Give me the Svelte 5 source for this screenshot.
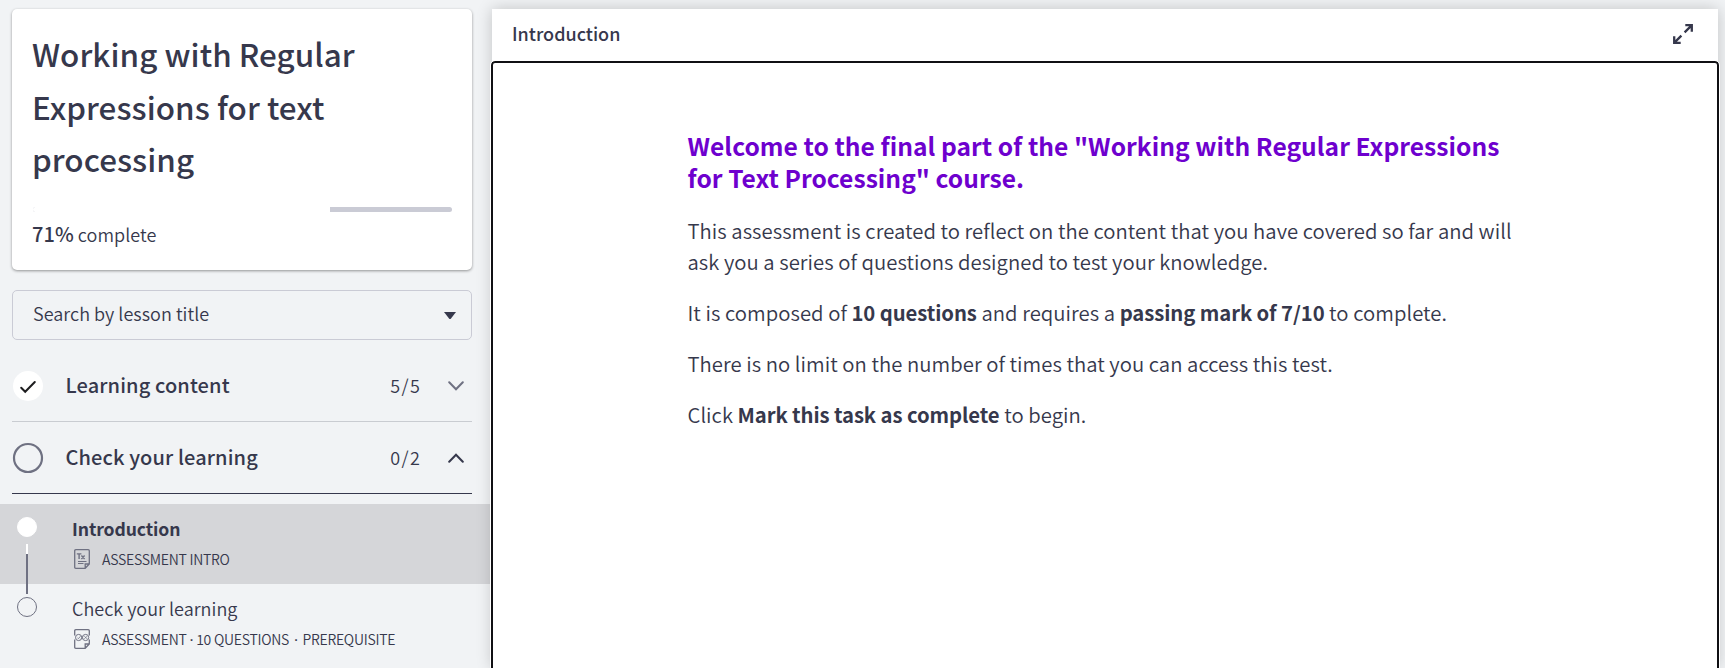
<script>
  const percent = 71;
  const sections = [
    { title: 'Learning content', count: '5/5', done: true, open: false },
    { title: 'Check your learning', count: '0/2', done: false, open: true }
  ];
</script>

<div class="page">
  <aside>
    <section class="card">
      <h1>Working with Regular Expressions for text processing</h1>
      <div class="track"><div class="fill" style="width: {percent}%"></div></div>
      <p class="progress"><b>{percent}%</b> complete</p>
    </section>

    <div class="search">
      <span>Search by lesson title</span>
      <svg width="12" height="7" viewBox="0 0 12 7"><path d="M0 0H12L7 6.4Q6 7.4 5 6.4Z" fill="#36384c" /></svg>
    </div>

    {#each sections as s}
      <div class="section" class:open={s.open}>
        {#if s.done}
          <svg class="status" width="32" height="32" viewBox="0 0 32 32">
            <circle cx="16" cy="16" r="15" fill="#fff" />
            <path d="M9.2 17.8L13.2 21.8L22.8 12" fill="none" stroke="#1d1d1f" stroke-width="2" stroke-linecap="round" />
          </svg>
        {:else}
          <svg class="status" width="32" height="32" viewBox="0 0 32 32">
            <circle cx="16" cy="16" r="14" fill="none" stroke="#6f7182" stroke-width="2.2" />
          </svg>
        {/if}
        <h2>{s.title}</h2>
        <span class="count">{s.count}</span>
        <svg class="chevron" width="16" height="10" viewBox="0 0 16 10">
          {#if s.open}
            <path d="M1.2 8.7L8 1.7L14.8 8.7" fill="none" stroke="#36384c" stroke-width="2" stroke-linecap="round" />
          {:else}
            <path d="M1.2 1.3L8 8.3L14.8 1.3" fill="none" stroke="#6f7182" stroke-width="2" stroke-linecap="round" />
          {/if}
        </svg>
      </div>
    {/each}

    <div class="lessons">
      <div class="lesson current">
        <div class="rail">
          <i class="dot filled"></i>
          <i class="line"></i>
        </div>
        <div class="info">
          <h3>Introduction</h3>
          <div class="meta">
            <svg width="16" height="20" viewBox="0 0 16 20" fill="none" stroke="#6f7182">
              <path d="M1.8 .7H14.2Q15.3 .7 15.3 1.8V15L11.2 19.3H1.8Q.7 19.3 .7 18.2V1.8Q.7 .7 1.8 .7ZM11.2 19V15H15.2" stroke-width="1.3" />
              <path d="M2.8 4.9H7.4M5.1 4.9V10M7.4 6.5L10.6 10M10.6 6.5L7.4 10" stroke-width="1.4" />
              <path d="M4 12.5H12.5M4 14.5H9.5" />
            </svg>
            <span>ASSESSMENT INTRO</span>
          </div>
        </div>
      </div>
      <div class="lesson next">
        <div class="rail"><i class="dot"></i></div>
        <div class="info">
          <h3>Check your learning</h3>
          <div class="meta">
            <svg width="16" height="20" viewBox="0 0 16 20" fill="none" stroke="#6f7182">
              <path d="M.7 6.5V1.8Q.7 .7 1.8 .7H14.2Q15.3 .7 15.3 1.8V6.5M15.3 10.5V15L11.2 19.3H1.8Q.7 19.3 .7 18.2V10.5M11.2 19V15H15.2" stroke-width="1.3" />
              <circle cx="4.6" cy="8.5" r="3.1" />
              <circle cx="11.6" cy="8.5" r="3.1" />
              <path d="M3.3 8.6L4.4 9.7L6.4 7.3M10.4 7.2L13 9.8M13 7.2L10.4 9.8M8.1 6.8V10.2" stroke-width=".8" />
            </svg>
            <span>ASSESSMENT<em>&nbsp;·&nbsp;</em>10 QUESTIONS<em class="wide">·</em>PREREQUISITE</span>
          </div>
        </div>
      </div>
    </div>
  </aside>

  <main>
    <header>
      <span>Introduction</span>
      <svg width="20" height="20" viewBox="0 0 20 20" fill="none" stroke="#36384c" stroke-width="2.3">
        <path d="M12.3 1.2H18.8V7.7M18.6 1.4L11.6 8.4M1.2 12.3V18.8H7.7M1.4 18.6L8.4 11.6" />
      </svg>
    </header>
    <article>
      <div class="body">
        <h2>Welcome to the final part of the "Working with Regular Expressions<br />for Text Processing" course.</h2>
        <p>This assessment is created to reflect on the content that you have covered so far and will<br />ask you a series of questions designed to test your knowledge.</p>
        <p>It is composed of <b>10 questions</b> and requires a <b>passing mark of 7/10</b> to complete.</p>
        <p>There is no limit on the number of times that you can access this test.</p>
        <p>Click <b>Mark this task as complete</b> to begin.</p>
      </div>
    </article>
  </main>
</div>

<style>
  :global(body) { background: #f1f3f5; overflow: hidden; }
  * { box-sizing: border-box; }
  h1, h2, h3, p { margin: 0; }
  svg { display: block; flex: none; }
  .page {
    display: flex;
    height: 668px;
    overflow: hidden;
    background: #f1f3f5;
    color: #36384c;
    font-family: 'Noto Sans CJK SC', 'Noto Sans', sans-serif;
    white-space: nowrap;
  }
  aside { width: 490px; flex: none; padding-top: 9px; }
  .card {
    width: 460px;
    height: 261px;
    margin-left: 12px;
    padding: 19px 20px 0 20px;
    border-radius: 5px;
    background: #fff;
    box-shadow: 0 1px 3px rgba(0, 0, 0, .4);
  }
  h1 { font-size: 31.4px; font-weight: 500; line-height: 52.5px; letter-spacing: .05px; white-space: normal; width: 350px; }
  .track { height: 5px; margin: 21.5px 0 0 1px; border-radius: 3px; background: #cacbd5; overflow: hidden; }
  .fill { height: 100%; background: #fff; }
  .progress { margin-top: 6px; font-size: 18px; font-weight: 350; line-height: 32px; letter-spacing: .05px; }
  .progress b { font-size: 20px; font-weight: 500; }
  .search {
    display: flex;
    align-items: center;
    justify-content: space-between;
    width: 460px;
    height: 50px;
    margin: 20px 0 0 12px;
    padding: 0 15px 0 20px;
    border: 1px solid #cacbd5;
    border-radius: 5px;
    font-size: 18px;
    font-weight: 350;
    letter-spacing: .03px;
  }
  .search span { margin-bottom: 4px; }
  .section {
    display: flex;
    align-items: center;
    width: 460px;
    height: 72px;
    margin-left: 12px;
    border-bottom: 1px solid #c9ccd1;
  }
  .search + .section { margin-top: 10px; }
  .section.open { border-bottom-color: #36384c; }
  .section h2 { flex: 1; padding: 0 0 2px 21.5px; font-size: 20px; font-weight: 500; letter-spacing: .12px; line-height: 29px; }
  .count { font-size: 18px; font-weight: 350; letter-spacing: 1.5px; margin-right: 26.5px; padding-bottom: 2px; }
  .chevron { margin-right: 8px; }
  .lessons { margin-top: 10px; }
  .lesson { display: flex; height: 80px; }
  .lesson.current { background: #d5d6d9; }
  .rail { display: flex; flex-direction: column; align-items: center; width: 20px; margin: 13px 0 0 17px; }
  .dot { flex: none; width: 20px; height: 20px; border: 1px solid #6f7182; border-radius: 50%; }
  .dot.filled { border-color: #fff; background: #fff; }
  .line { flex: none; width: 2px; height: 50px; margin-top: 7px; background: linear-gradient(#fff 10px, #6f7182 10px); z-index: 1; }
  .info { padding: 10.5px 0 0 35px; }
  h3 { font-size: 18px; font-weight: 350; line-height: 28px; letter-spacing: .03px; }
  .current h3 { font-size: 17.6px; font-weight: 700; letter-spacing: -.1px; }
  .next .info { padding-top: 9.5px; }
  .meta { display: flex; align-items: center; gap: 12px; margin: 6.5px 0 0 2px; height: 20px; font-size: 14px; font-weight: 350; letter-spacing: -.25px; }
  .next .meta { margin-top: 7.5px; }
  .meta span { padding-bottom: 1px; }
  .meta em { font-family: 'Open Sans', sans-serif; font-style: normal; font-weight: 600; font-size: 13px; }
  .meta .wide { padding: 0 5px; }
  main {
    display: flex;
    flex-direction: column;
    width: 1226px;
    margin: 9px 0 0 2px;
    background: #fff;
    box-shadow: 0 0 15px rgba(0, 0, 0, .2);
    z-index: 1;
  }
  header { display: flex; align-items: center; justify-content: space-between; height: 52px; padding: 0 25px 0 20px; font-size: 18px; font-weight: 500; line-height: 28px; }
  header span { margin-bottom: 4px; }
  header svg { margin-bottom: 2px; }
  article {
    flex: 1;
    margin: 0 -1px -10px;
    padding: 66px 0 0 194.5px;
    border: 2px solid #101014;
    border-radius: 4px;
    outline: 1px solid #fff;
    background: #fff;
  }
  .body h2 { color: #6e00ce; font-size: 24.6px; font-weight: 700; line-height: 32px; letter-spacing: .03px; }
  .body p { margin-top: 20px; font-size: 20.3px; font-weight: 350; line-height: 31px; letter-spacing: .04px; }
  .body h2 + p { margin-top: 22px; }
  .body b { letter-spacing: -.08px; }
</style>
